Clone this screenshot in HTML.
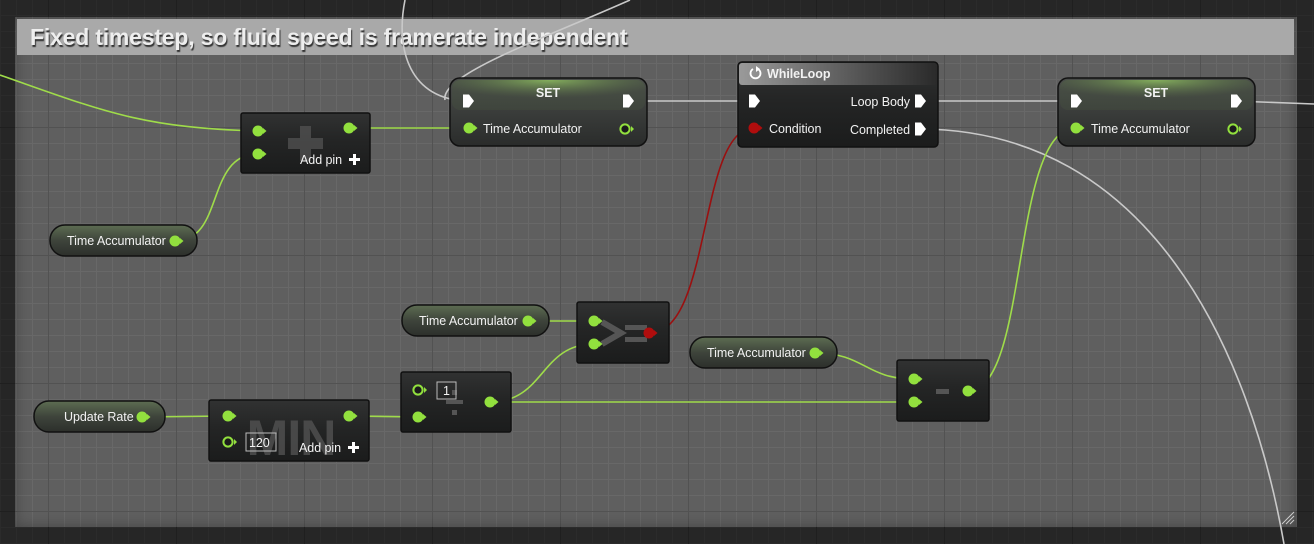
<!DOCTYPE html>
<html><head><meta charset="utf-8"><style>
html,body{margin:0;padding:0;background:#262626;}
#w{position:relative;width:1314px;height:544px;overflow:hidden;
background-color:#262626;
background-image:linear-gradient(90deg,#1f1f1f 1px,transparent 1px),linear-gradient(#1f1f1f 1px,transparent 1px),linear-gradient(90deg,#2b2b2b 1px,transparent 1px),linear-gradient(#2b2b2b 1px,transparent 1px);
background-size:128px 128px,128px 128px,16px 16px,16px 16px;background-position:48px 127px,48px 127px,0 15px,0 15px;}
#c{position:absolute;left:15px;top:17px;width:1282px;height:510px;
background-color:#5f5f5f;
background-image:linear-gradient(90deg,#525252 1px,transparent 1px),linear-gradient(#525252 1px,transparent 1px),linear-gradient(90deg,#686868 1px,transparent 1px),linear-gradient(#686868 1px,transparent 1px);
background-size:128px 128px,128px 128px,16px 16px,16px 16px;background-position:33px 110px,33px 110px,1px 14px,1px 14px;
box-shadow:inset 0 0 14px rgba(0,0,0,.3);}
#h{position:absolute;left:17px;top:19px;width:1277px;height:36px;background:#a9a9a9;}
#t{position:absolute;left:30px;top:24px;font:bold 23px "Liberation Sans",sans-serif;color:#eee;text-shadow:1px 2px 1px #333;letter-spacing:-0.2px;white-space:nowrap}
svg{position:absolute;left:0;top:0}
text{font-family:"Liberation Sans",sans-serif;fill:#f2f2f2;font-size:12.5px;letter-spacing:-0.05px}
</style></head><body><div id="w">
<div id="c"></div><div id="h"></div><div id="t">Fixed timestep, so fluid speed is framerate independent</div>
<svg width="1314" height="544" viewBox="0 0 1314 544">
<defs>
<linearGradient id="nb" x1="0" y1="0" x2="0" y2="1"><stop offset="0" stop-color="#313232"/><stop offset="0.45" stop-color="#242525"/><stop offset="1" stop-color="#1b1c1c"/></linearGradient>
<linearGradient id="sb" x1="0" y1="0" x2="0" y2="1"><stop offset="0" stop-color="#4a4d4a"/><stop offset="1" stop-color="#2a2c2b"/></linearGradient>
<radialGradient id="sg" cx="0.5" cy="0" r="0.6"><stop offset="0" stop-color="#8fc060"/><stop offset="1" stop-color="#4a5a40" stop-opacity="0.3"/></radialGradient>
<linearGradient id="pg" x1="0" y1="0" x2="0" y2="1"><stop offset="0" stop-color="#5d6d52"/><stop offset="0.5" stop-color="#3e443b"/><stop offset="1" stop-color="#2c2f2b"/></linearGradient>
<linearGradient id="wg" x1="0" y1="0" x2="1" y2="0"><stop offset="0" stop-color="#9a9a9a"/><stop offset="0.6" stop-color="#555"/><stop offset="1" stop-color="#2a2a2a"/></linearGradient>
<g id="dp"><circle r="5.5" fill="#92e03e"/><path d="M5,-3 L8.5,0 L5,3z" fill="#92e03e"/></g>
<g id="hp"><circle r="4.6" fill="#1c1c1c" stroke="#92e03e" stroke-width="2"/><path d="M6,-3 L9,0 L6,3z" fill="#92e03e"/></g>
<g id="ex"><path d="M-5,-6.5 H1 L6,0 L1,6.5 H-5z" fill="#fff"/></g>
</defs>
<g fill="none" stroke-width="1.6">
<path d="M0,75 C100,110 140,128 258,131" stroke="#9fdc4a"/>
<path d="M349,128 L469,128" stroke="#9fdc4a"/>
<path d="M175,241 C225,241 205,154 258,154" stroke="#9fdc4a"/>
<path d="M405,0 C395,50 410,100 468,101" stroke="#c9c9c9"/>
<path d="M630,0 C540,40 440,75 445,100" stroke="#c9c9c9"/>
<path d="M628,101 L754,101" stroke="#c9c9c9"/>
<path d="M920,101 L1076,101" stroke="#c9c9c9"/>
<path d="M1235,101 L1314,104" stroke="#c9c9c9"/>
<path d="M920,129 C1150,130 1250,350 1284,544" stroke="#c9c9c9"/>
<path d="M650,333 C712,333 698,128 754,128" stroke="#9a1010"/>
<path d="M528,321 L594,321" stroke="#9fdc4a"/>
<path d="M490,402 C545,402 540,344 594,344" stroke="#9fdc4a"/>
<path d="M490,402 L914,402" stroke="#9fdc4a"/>
<path d="M815,353 C865,353 865,379 914,379" stroke="#9fdc4a"/>
<path d="M968,391 C1030,391 1010,128 1076,128" stroke="#9fdc4a"/>
<path d="M142,417 L228,416" stroke="#9fdc4a"/>
<path d="M349,416 L418,417" stroke="#9fdc4a"/>
</g>
<rect x="450" y="78" width="197" height="68" rx="10" fill="url(#sb)" stroke="#111" stroke-width="1.5"/>
<rect x="452" y="80" width="193" height="30" rx="8" fill="url(#sg)" opacity="0.85"/>
<text x="548" y="97" text-anchor="middle" font-weight="bold">SET</text>
<use href="#ex" x="468" y="101"/><use href="#ex" x="628" y="101"/>
<use href="#dp" x="469" y="128"/><text x="483" y="133">Time Accumulator</text><use href="#hp" x="625" y="129"/>
<rect x="1058" y="78" width="197" height="68" rx="10" fill="url(#sb)" stroke="#111" stroke-width="1.5"/>
<rect x="1060" y="80" width="193" height="30" rx="8" fill="url(#sg)" opacity="0.85"/>
<text x="1156" y="97" text-anchor="middle" font-weight="bold">SET</text>
<use href="#ex" x="1076" y="101"/><use href="#ex" x="1236" y="101"/>
<use href="#dp" x="1076" y="128"/><text x="1091" y="133">Time Accumulator</text><use href="#hp" x="1233" y="129"/>
<rect x="738" y="62" width="200" height="85" rx="4" fill="url(#nb)" stroke="#111" stroke-width="1.5"/>
<rect x="739" y="63" width="198" height="22" rx="3" fill="url(#wg)"/>
<path d="M753,69 A5,5 0 1 0 758,69" fill="none" stroke="#fff" stroke-width="1.8"/><path d="M756,66 L760,69 L756,72z" fill="#fff"/>
<text x="767" y="78" font-weight="bold">WhileLoop</text>
<use href="#ex" x="754" y="101"/><text x="910" y="106" text-anchor="end">Loop Body</text><use href="#ex" x="920" y="101"/>
<circle cx="754" cy="128" r="5.5" fill="#b00d0d"/><path d="M759,125 L762.5,128 L759,131z" fill="#b00d0d"/>
<text x="769" y="133">Condition</text><text x="910" y="134" text-anchor="end">Completed</text><use href="#ex" x="920" y="129"/>
<rect x="241" y="113" width="129" height="60" rx="2" fill="url(#nb)" stroke="#111" stroke-width="1.5"/>
<path d="M300,126 h11 v12 h12 v11 h-12 v12 h-11 v-12 h-12 v-11 h12z" fill="#555" opacity="0.7"/>
<use href="#dp" x="258" y="131"/><use href="#dp" x="258" y="154"/><use href="#dp" x="349" y="128"/>
<text x="300" y="164">Add pin</text><path d="M353,154 h3 v4 h4 v3 h-4 v4 h-3 v-4 h-4 v-3 h4z" fill="#fff"/>
<rect x="50" y="225" width="147" height="31" rx="15" fill="url(#pg)" stroke="#111" stroke-width="1.5"/>
<text x="67" y="245">Time Accumulator</text><use href="#dp" x="175" y="241"/>
<rect x="402" y="305" width="147" height="31" rx="15" fill="url(#pg)" stroke="#111" stroke-width="1.5"/>
<text x="419" y="325">Time Accumulator</text><use href="#dp" x="528" y="321"/>
<rect x="690" y="337" width="147" height="31" rx="15" fill="url(#pg)" stroke="#111" stroke-width="1.5"/>
<text x="707" y="357">Time Accumulator</text><use href="#dp" x="815" y="353"/>
<rect x="34" y="401" width="131" height="31" rx="15" fill="url(#pg)" stroke="#111" stroke-width="1.5"/>
<text x="64" y="421">Update Rate</text><use href="#dp" x="142" y="417"/>
<rect x="577" y="302" width="92" height="61" rx="2" fill="url(#nb)" stroke="#111" stroke-width="1.5"/>
<path d="M602,322 L621,333 L602,344" fill="none" stroke="#555" stroke-width="6"/>
<rect x="625" y="325" width="22" height="5" fill="#555"/><rect x="625" y="337" width="22" height="5" fill="#555"/>
<use href="#dp" x="594" y="321"/><use href="#dp" x="594" y="344"/>
<circle cx="649" cy="333" r="5.5" fill="#b00d0d"/><path d="M654,330 L657.5,333 L654,336z" fill="#b00d0d"/>
<rect x="897" y="360" width="92" height="61" rx="2" fill="url(#nb)" stroke="#111" stroke-width="1.5"/>
<rect x="936" y="389" width="13" height="5" fill="#555"/>
<use href="#dp" x="914" y="379"/><use href="#dp" x="914" y="402"/><use href="#dp" x="968" y="391"/>
<rect x="209" y="400" width="160" height="61" rx="2" fill="url(#nb)" stroke="#111" stroke-width="1.5"/>
<text x="291" y="455" text-anchor="middle" style="font-size:50px;font-weight:bold;fill:#555;opacity:.75;letter-spacing:-1px">MIN</text>
<use href="#dp" x="228" y="416"/><use href="#hp" x="228" y="442"/><use href="#dp" x="349" y="416"/>
<rect x="246" y="433" width="30" height="18" fill="none" stroke="#bbb" stroke-width="1"/><text x="249" y="447">120</text>
<text x="299" y="452">Add pin</text><path d="M352,442 h3 v4 h4 v3 h-4 v4 h-3 v-4 h-4 v-3 h4z" fill="#fff"/>
<rect x="401" y="372" width="110" height="60" rx="2" fill="url(#nb)" stroke="#111" stroke-width="1.5"/>
<rect x="452" y="390" width="5" height="5" fill="#555"/><rect x="446" y="400" width="17" height="4" fill="#555"/><rect x="452" y="410" width="5" height="5" fill="#555"/>
<use href="#hp" x="418" y="390"/><use href="#dp" x="418" y="417"/><use href="#dp" x="490" y="402"/>
<rect x="437" y="382" width="19" height="17" fill="none" stroke="#bbb" stroke-width="1"/><text x="443" y="395">1</text>
<path d="M1282,524 L1294,512 M1286,524 L1294,516 M1290,524 L1294,520" stroke="#ccc" stroke-width="1"/>
</svg>
</div></body></html>
